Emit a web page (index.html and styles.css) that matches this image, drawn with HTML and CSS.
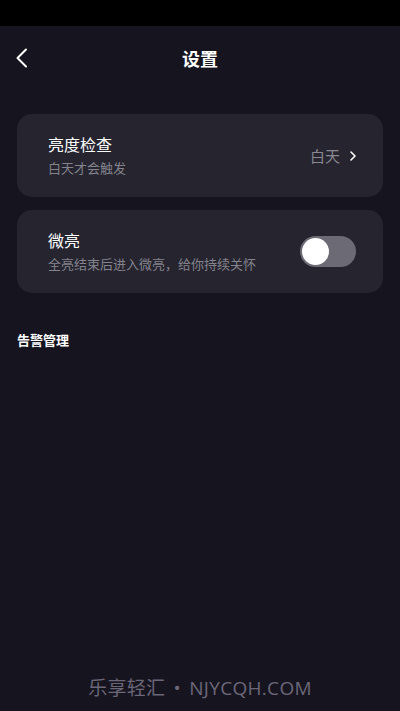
FILE: index.html
```html
<!DOCTYPE html>
<html lang="zh">
<head>
    <meta charset="UTF-8">
    <meta name="viewport" content="width=device-width, initial-scale=1.0">
    <title>设置</title>
    <link rel="stylesheet" href="styles.css">
</head>
<body>
    <div class="status-bar"></div>
    <div class="header">
        <span class="back">
            <svg width="14" height="20" viewBox="0 0 14 20"><path d="M11 1.5 L2.5 10 L11 18.5" fill="none" stroke="#fff" stroke-width="2" stroke-linecap="round" stroke-linejoin="round"/></svg>
        </span>
        <h1>设置</h1>
    </div>
    <div class="content">
        <div class="card">
            <div class="card-text">
                <div class="card-title">亮度检查</div>
                <div class="card-desc">白天才会触发</div>
            </div>
            <div class="card-value">
                白天
                <svg width="8" height="12" viewBox="0 0 8 12"><path d="M2 2 L6 6 L2 10" fill="none" stroke="#fff" stroke-width="1.6" stroke-linecap="round" stroke-linejoin="round"/></svg>
            </div>
        </div>
        <div class="card">
            <div class="card-text">
                <div class="card-title">微亮</div>
                <div class="card-desc">全亮结束后进入微亮，给你持续关怀</div>
            </div>
            <div class="switch"><div class="knob"></div></div>
        </div>
        <div class="section-title">告警管理</div>
    </div>
    <div class="watermark">乐享轻汇 • NJYCQH.COM</div>
</body>
</html>
```

FILE: styles.css
```css
body {
    margin: 0;
    width: 400px;
    height: 711px;
    background-color: #15141f;
    font-family: "Noto Sans CJK SC", "Noto Sans", sans-serif;
    color: #fff;
    display: flex;
    flex-direction: column;
    overflow: hidden;
}
.status-bar {
    height: 26px;
    background: #000;
}
.header {
    position: relative;
    height: 64px;
    display: flex;
    align-items: center;
    justify-content: center;
}
.header h1 {
    margin: 0;
    font-size: 18px;
    font-weight: bold;
}
.back {
    position: absolute;
    left: 15px;
    top: 22px;
    display: flex;
}
.content {
    flex: 1;
    padding: 24px 17px 0;
    display: flex;
    flex-direction: column;
    gap: 13px;
}
.card {
    background: #25242f;
    border-radius: 15px;
    height: 83px;
    padding: 0 27px 0 31px;
    display: flex;
    align-items: center;
    justify-content: space-between;
}
.card-title {
    font-size: 16px;
    line-height: 22px;
    margin-top: -2px;
}
.card-desc {
    margin-top: 4px;
    font-size: 13px;
    line-height: 18px;
    color: #84838d;
}
.card-value {
    display: flex;
    align-items: center;
    gap: 9px;
    font-size: 15px;
    color: #8a8992;
    margin-right: -1px;
}
.switch {
    width: 56px;
    height: 31px;
    border-radius: 16px;
    background: #6b6a75;
    display: flex;
    align-items: center;
    padding: 0 2px;
    box-sizing: border-box;
}
.knob {
    width: 27px;
    height: 27px;
    border-radius: 50%;
    background: #fff;
}
.section-title {
    margin-top: 24px;
    font-size: 13px;
    font-weight: bold;
}
.watermark {
    text-align: center;
    font-family: "Open Sans", "Noto Sans CJK SC", sans-serif;
    font-size: 19px;
    letter-spacing: 0.3px;
    word-spacing: 3px;
    color: #6c6778;
    padding-bottom: 10px;
}
```
